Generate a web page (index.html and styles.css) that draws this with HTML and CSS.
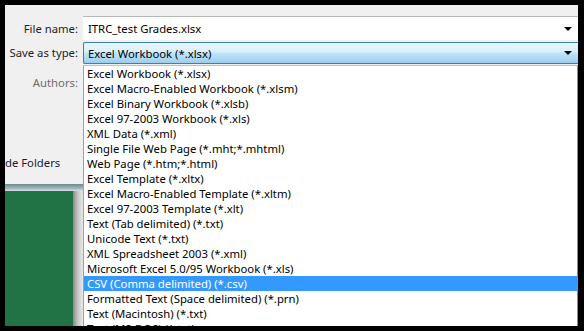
FILE: index.html
```html
<!DOCTYPE html>
<html>
<head>
<meta charset="utf-8">
<link rel="stylesheet" href="styles.css">
</head>
<body>
<div class="frame">
  <div class="dialog">
    <div class="label row1">File name:</div>
    <div class="input row1">
      <span class="value">ITRC_test Grades.xlsx</span>
      <span class="arrow"></span>
    </div>
    <div class="label row2">Save as type:</div>
    <div class="combo row2">
      <span class="value">Excel Workbook (*.xlsx)</span>
      <span class="arrow"></span>
    </div>
    <div class="side">
      <div class="label muted">Authors:</div>
      <div class="folders">de Folders</div>
      <div class="bar"></div>
      <div class="green-area">
        <div class="green"></div>
        <div class="shade"></div>
      </div>
    </div>
    <ul class="list">
      <li>Excel Workbook (*.xlsx)</li>
      <li>Excel Macro-Enabled Workbook (*.xlsm)</li>
      <li>Excel Binary Workbook (*.xlsb)</li>
      <li>Excel 97-2003 Workbook (*.xls)</li>
      <li>XML Data (*.xml)</li>
      <li>Single File Web Page (*.mht;*.mhtml)</li>
      <li>Web Page (*.htm;*.html)</li>
      <li>Excel Template (*.xltx)</li>
      <li>Excel Macro-Enabled Template (*.xltm)</li>
      <li>Excel 97-2003 Template (*.xlt)</li>
      <li>Text (Tab delimited) (*.txt)</li>
      <li>Unicode Text (*.txt)</li>
      <li>XML Spreadsheet 2003 (*.xml)</li>
      <li>Microsoft Excel 5.0/95 Workbook (*.xls)</li>
      <li class="selected">CSV (Comma delimited) (*.csv)</li>
      <li>Formatted Text (Space delimited) (*.prn)</li>
      <li>Text (Macintosh) (*.txt)</li>
      <li>Text (MS-DOS) (*.txt)</li>
    </ul>
  </div>
</div>
</body>
</html>
```

FILE: styles.css
```css
* { box-sizing: border-box; }
html, body { margin: 0; padding: 0; background: #000; }
body { width: 584px; height: 331px; overflow: hidden; }

.frame {
  width: 584px;
  height: 331px;
  padding: 5px 6px 5px 5px;
  background: #000;
}

.dialog {
  width: 573px;
  height: 321px;
  background: #f0f0f0;
  overflow: hidden;
  display: grid;
  grid-template-columns: 78px 1fr;
  grid-template-rows: 11px 25px 23px 1fr;
  font-family: "Noto Sans", "Open Sans", sans-serif;
  font-size: 11.3px;
  color: #000;
}

.label {
  text-align: right;
  padding-right: 5px;
  color: #1c1c2c;
  line-height: 15px;
  white-space: nowrap;
  align-self: center;
}
.row1 { grid-row: 2; }
.row2 { grid-row: 3; }
.label.row1, .label.row2 { grid-column: 1; }
.input.row1, .combo.row2 { grid-column: 2; }
.label.row1 { margin-top: -1px; }

.input {
  background: #fff;
  border-top: 1px solid #b8b8b8;
  display: flex;
  align-items: center;
  padding: 0 6px 0 5px;
  height: 24px;
  align-self: start;
}
.value { flex: 1; line-height: 15px; white-space: nowrap; }

.arrow {
  width: 0;
  height: 0;
  border-left: 4px solid transparent;
  border-right: 4px solid transparent;
  border-top: 4px solid #000;
}

.combo {
  margin-top: 1px;
  height: 22px;
  border: 1px solid #3c7fb1;
  border-right: none;
  border-radius: 2px 0 0 2px;
  background: linear-gradient(to bottom, #eaf6fd 0%, #d9f0fc 45%, #bee6fd 50%, #9dcdec 100%);
  display: flex;
  align-items: center;
  padding: 0 6px 0 4px;
}

.side {
  grid-column: 1;
  grid-row: 4;
  display: flex;
  flex-direction: column;
}
.side .muted {
  color: #6d6d6d;
  margin-top: 11px;
  align-self: stretch;
}
.folders {
  margin-top: 65px;
  line-height: 15px;
  color: #1c1c2c;
  white-space: nowrap;
}
.bar {
  margin-top: 14px;
  height: 7px;
  background: linear-gradient(to bottom, #6d8a8f 0%, #9fb4b8 60%, #d6e2e4 100%);
}
.green-area {
  flex: 1;
  display: flex;
}
.green { width: 68px; background: #217346; }
.shade {
  flex: 1;
  background: linear-gradient(to right, #8a8a8a 0%, #c9c9c9 50%, #e8e8e8 100%);
}

.list {
  grid-column: 2;
  grid-row: 4;
  margin: 1px 0 0 0;
  padding: 0;
  list-style: none;
  background: #fff;
  border-left: 1px solid #a0a0a0;
  border-right: 1px solid #8a8a8a;
  border-top: 1px solid #c0c0c0;
}
.list li {
  height: 15px;
  line-height: 15px;
  padding-left: 3px;
  white-space: nowrap;
}
.list li.selected {
  background: #3399ff;
  color: #fff;
}
```
